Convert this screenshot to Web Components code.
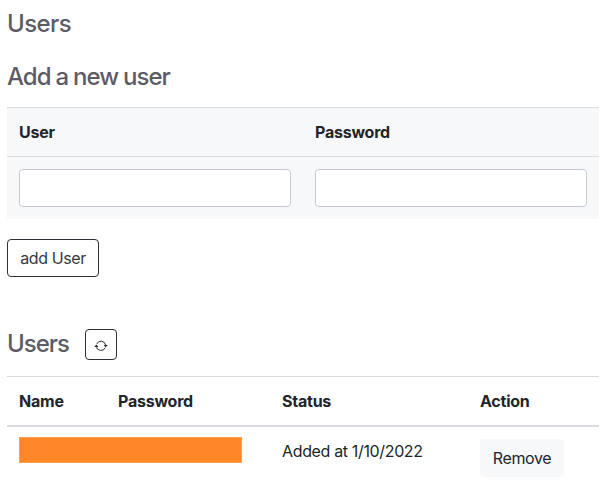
<!DOCTYPE html>
<html lang="en">
<head>
<meta charset="utf-8">
<title>Users</title>
<style>
body { margin: 0; background: #fff; color: #212529; font: 16px/24px Inter, "Liberation Sans", sans-serif; }
</style>
</head>
<body>
<users-page></users-page>
<script>
const define = (name, html) => customElements.define(name, class extends HTMLElement {
  constructor() {
    super();
    const t = document.createElement('template');
    t.innerHTML = html;
    this.attachShadow({ mode: 'open' }).append(t.content.cloneNode(true));
  }
});

define('page-heading', `<style>
  :host { display: block; color: #5c5c66; font-size: 24px; line-height: 29px; font-weight: 500; letter-spacing: var(--track, -.6px); word-spacing: -.5px; white-space: nowrap; }
  h4 { margin: 0; font: inherit; }
</style><h4><slot></slot></h4>`);

define('head-cell', `<style>
  :host { display: block; padding: 12px; font-weight: 700; letter-spacing: var(--track, -.23px); white-space: nowrap; }
</style><slot></slot>`);

define('body-cell', `<style>
  :host { display: block; padding: 12px; white-space: nowrap; letter-spacing: var(--track, -.35px); }
</style><slot></slot>`);

define('text-field', `<style>
  :host { display: block; }
  input { display: block; box-sizing: border-box; width: 100%; height: 38px; border: 1px solid #c4c9d0; border-radius: 4px; background: #fff; padding: 6px 12px; font: inherit; outline: 0; }
</style><input>`);

define('action-button', `<style>
  :host { display: block; width: fit-content; }
  button { display: flex; align-items: center; justify-content: center; box-sizing: border-box; width: var(--w); height: var(--h, 38px); padding: 0; margin: 0;
    border: 1px solid var(--line, #2c2f36); border-radius: 4px; background: var(--fill, #fff); color: var(--ink, #343a40); font: inherit; letter-spacing: var(--track, -.38px); white-space: nowrap; }
</style><button type="button"><slot></slot></button>`);

define('refresh-icon', `<style>
  :host { display: block; width: 14px; height: 14px; }
  svg { display: block; }
</style><svg width="14" height="14" viewBox="0 0 14 14">
  <path d="M2.7 5.1A4.7 4.7 0 0 1 11.7 6.4M11.3 8.6A4.7 4.7 0 0 1 2.3 7.3" fill="none" stroke="#212529" stroke-width=".95"/>
  <path d="M.3 7.9L2.3 5.6L4.4 7.9ZM9.6 6L13.8 6L11.7 8.3Z" fill="#212529"/>
</svg>`);

define('new-user-form', `<style>
  :host { display: grid; grid-template-columns: 1fr 1fr; background: #f7f8fa; border-top: 1px solid #d9dde1; }
  head-cell { border-bottom: 1px solid #d9dde1; }
</style>
<head-cell>User</head-cell><head-cell>Password</head-cell>
<body-cell><text-field></text-field></body-cell><body-cell><text-field></text-field></body-cell>`);

define('user-list', `<style>
  :host { display: grid; grid-template-columns: 99px 164px 198px 131px; border-top: 1px solid #d9dde1; }
  head-cell { border-bottom: 2px solid #d9dde1; }
  .wide { grid-column: span 2; padding: 10px 28px 0 12px; }
  .mask { height: 26px; background: #ff8727; box-shadow: inset 0 0 0 1px #ffa04e; }
  action-button { --w: 84px; --fill: #f7f8fa; --line: #f7f8fa; --ink: #212529; }
</style>
<head-cell>Name</head-cell><head-cell>Password</head-cell><head-cell>Status</head-cell><head-cell>Action</head-cell>
<body-cell class="wide"><div class="mask"></div></body-cell>
<body-cell>Added at 1/10/2022</body-cell>
<body-cell><action-button>Remove</action-button></body-cell>`);

define('users-page', `<style>
  :host { display: block; box-sizing: border-box; width: 612px; height: 492px; overflow: hidden; padding: 9px 13px 0 7px; }
  .sub { margin: 24px 0 16px; --track: -.98px; }
  .add { --w: 92px; margin-top: 20px; }
  .bar { display: flex; gap: 16px; margin: 52px 0 16px; }
  .bar page-heading { width: 62px; --track: -1px; }
  .bar action-button { --w: 32px; --h: 31px; }
  refresh-icon { margin-top: 3px; }
</style>
<page-heading>Users</page-heading>
<page-heading class="sub">Add a new user</page-heading>
<new-user-form></new-user-form>
<action-button class="add">add User</action-button>
<div class="bar"><page-heading>Users</page-heading><action-button><refresh-icon></refresh-icon></action-button></div>
<user-list></user-list>`);
</script>
</body>
</html>
